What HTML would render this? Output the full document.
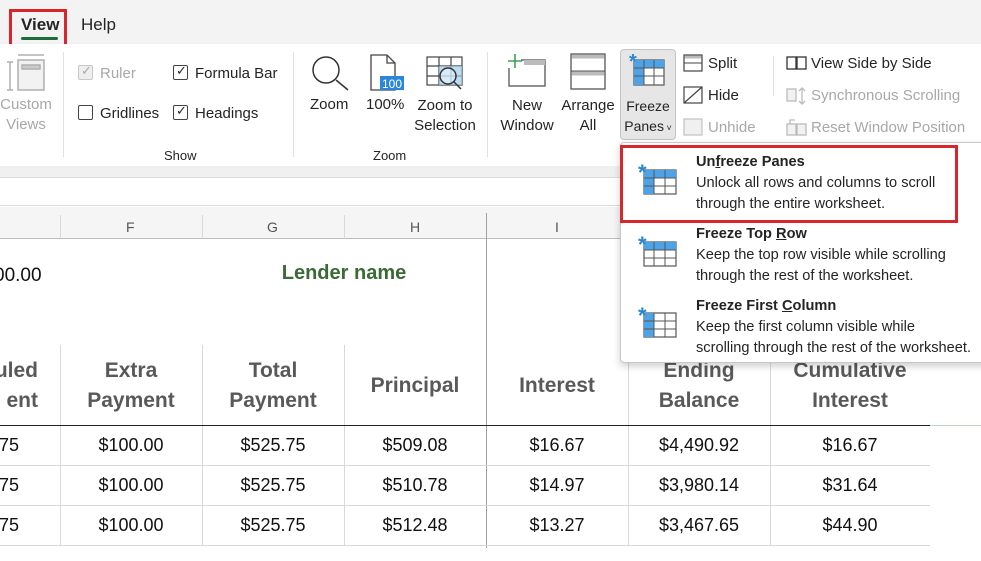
<!DOCTYPE html>
<html><head><meta charset="utf-8"><style>
*{margin:0;padding:0;box-sizing:border-box}
body{width:981px;height:561px;overflow:hidden;background:#fff;font-family:"Liberation Sans",sans-serif;position:relative;color:#242424}
.a{position:absolute;white-space:nowrap}
.t{font-size:15px}
.g{color:#a8a8a8}
.cell{position:absolute;text-align:center;font-family:"Liberation Sans Narrow","Liberation Sans",sans-serif}
.hd{font-weight:bold;color:#595959;font-size:21px;line-height:30px}
.dv{font-size:18px;color:#111}
.vl{position:absolute;width:1px;background:#d9d9d9}
.hl{position:absolute;height:1px;background:#d9d9d9}
.cb{position:absolute;width:15px;height:15px;border:1px solid #444;border-radius:2px;background:#fff}
.c{text-align:center;line-height:20px}
</style></head><body>
<div class="a" style="left:0;top:0;width:981px;height:44px;background:#f3f3f3"></div>
<div class="a" style="left:9px;top:9px;width:58px;height:44px;border:3px solid #d9252c"></div>
<div class="a" style="left:21px;top:15px;font-size:17px;font-weight:bold;color:#242424">View</div>
<div class="a" style="left:21px;top:37px;width:37px;height:3px;background:#1e6b3c;border-radius:2px"></div>
<div class="a" style="left:81px;top:15px;font-size:17px">Help</div>
<div class="a" style="left:0;top:44px;width:981px;height:122px;background:#fff;box-shadow:0 2px 4px rgba(0,0,0,.15)"></div>
<div class="a" style="left:0;top:166px;width:981px;height:11px;background:#f0f0f0"></div>
<div class="a" style="left:0;top:177px;width:981px;height:29px;background:#fff;border-top:1px solid #dcdcdc;border-bottom:1px solid #dcdcdc"></div>
<svg class="a" style="left:6px;top:52px" width="40" height="40"><g stroke="#b0b0b0" fill="none" stroke-width="1.5"><line x1="12" y1="3" x2="38" y2="3"/><rect x="12" y="8" width="26" height="30" fill="#f2f2f2"/><rect x="16" y="13" width="18" height="4" fill="#ccc"/><line x1="4" y1="10" x2="4" y2="38"/><line x1="1" y1="10" x2="7" y2="10"/><line x1="1" y1="38" x2="7" y2="38"/></g></svg>
<div class="a t g c" style="left:0;top:95px;width:52px">Custom<br>Views</div>
<div class="vl" style="left:63px;top:52px;height:105px;background:#e1e1e1"></div>
<div class="cb" style="left:78px;top:65px;border-color:#c8c8c8;background:#eee"></div><div class="a g" style="left:81px;top:63px;font-size:13px">✓</div>
<div class="a t g" style="left:100px;top:65px">Ruler</div>
<div class="cb" style="left:78px;top:105px"></div>
<div class="a t" style="left:100px;top:105px">Gridlines</div>
<div class="cb" style="left:173px;top:65px"></div><div class="a" style="left:176px;top:63px;font-size:13px">✓</div>
<div class="a t" style="left:195px;top:65px">Formula Bar</div>
<div class="cb" style="left:173px;top:105px"></div><div class="a" style="left:176px;top:103px;font-size:13px">✓</div>
<div class="a t" style="left:195px;top:105px">Headings</div>
<div class="a" style="left:164px;top:148px;font-size:13px">Show</div>
<div class="vl" style="left:293px;top:52px;height:105px;background:#e1e1e1"></div>
<svg class="a" style="left:310px;top:54px" width="42" height="40"><circle cx="16" cy="16" r="13" stroke="#333" stroke-width="1.5" fill="none"/><line x1="26" y1="26" x2="38" y2="36" stroke="#333" stroke-width="1.5"/></svg>
<div class="a t" style="left:310px;top:96px">Zoom</div>
<svg class="a" style="left:369px;top:54px" width="36" height="38"><path d="M2 1H18L26 9V36H2Z" fill="#fff" stroke="#444" stroke-width="1.3"/><path d="M18 1V9H26" fill="none" stroke="#444" stroke-width="1.3"/><rect x="11" y="22" width="24" height="14" fill="#2b88d8"/><text x="23" y="34" font-size="12" fill="#fff" text-anchor="middle" font-family="Liberation Sans Narrow,Liberation Sans,sans-serif">100</text></svg>
<div class="a t" style="left:366px;top:96px">100%</div>
<svg class="a" style="left:426px;top:56px" width="40" height="36"><g stroke="#444" stroke-width="1.2" fill="none"><rect x="1" y="1" width="35" height="28"/><line x1="1" y1="10" x2="36" y2="10"/><line x1="1" y1="20" x2="36" y2="20"/><line x1="13" y1="1" x2="13" y2="29"/><line x1="25" y1="1" x2="25" y2="29"/></g><rect x="13" y="10" width="23" height="19" fill="#9fcdf0" opacity=".7"/><circle cx="22" cy="20" r="8" stroke="#333" stroke-width="1.5" fill="#fff" fill-opacity=".4"/><line x1="28" y1="26" x2="35" y2="33" stroke="#333" stroke-width="1.5"/></svg>
<div class="a t c" style="left:414px;top:96px;width:62px">Zoom to<br>Selection</div>
<div class="a" style="left:373px;top:148px;font-size:13px">Zoom</div>
<div class="vl" style="left:487px;top:52px;height:105px;background:#e1e1e1"></div>
<svg class="a" style="left:506px;top:53px" width="42" height="36"><rect x="3" y="7" width="36" height="26" fill="#fff" stroke="#555" stroke-width="1.3"/><rect x="18" y="7" width="21" height="5" fill="#bbb"/><rect x="1" y="1" width="14" height="14" fill="#fff"/><path d="M9 1V15M2 8H16" stroke="#3aa057" stroke-width="1.6"/></svg>
<div class="a t c" style="left:497px;top:96px;width:60px">New<br>Window</div>
<svg class="a" style="left:570px;top:53px" width="38" height="38"><rect x="1" y="1" width="34" height="35" fill="#fff" stroke="#555" stroke-width="1.3"/><rect x="1.5" y="1.5" width="33" height="4" fill="#bbb"/><line x1="1" y1="18" x2="35" y2="18" stroke="#555"/><rect x="1.5" y="18.5" width="33" height="4" fill="#bbb"/></svg>
<div class="a t c" style="left:558px;top:96px;width:60px">Arrange<br>All</div>
<div class="a" style="left:620px;top:49px;width:56px;height:91px;background:#e6e6e6;border:1px solid #c4c4c4;border-radius:4px"></div>
<svg class="a" style="left:626px;top:52px" width="42" height="36"><rect x="8" y="8" width="30" height="25" fill="#fff" stroke="#555" stroke-width="1.2"/><rect x="8" y="8" width="30" height="8" fill="#4da3e6"/><rect x="8" y="8" width="10" height="25" fill="#4da3e6"/><path d="M8 16H38M8 24H38M18 8V33M28 8V33" stroke="#555" stroke-width="1"/><text x="3" y="16" font-size="20" fill="#2a86d1" font-weight="bold" font-family="Liberation Sans">*</text></svg>
<div class="a c" style="left:620px;top:96px;width:56px;font-size:14px">Freeze<br>Panes<span style="font-size:9px"> ˅</span></div>
<svg class="a" style="left:683px;top:54px" width="20" height="18"><rect x="1" y="1" width="18" height="16" fill="#fff" stroke="#444" stroke-width="1.2"/><rect x="1.5" y="1.5" width="17" height="3" fill="#bbb"/><line x1="1" y1="9" x2="19" y2="9" stroke="#444"/></svg>
<div class="a t" style="left:708px;top:55px">Split</div>
<svg class="a" style="left:683px;top:86px" width="20" height="18"><rect x="1" y="1" width="18" height="16" fill="#fff" stroke="#444" stroke-width="1.2"/><line x1="1" y1="17" x2="19" y2="1" stroke="#444" stroke-width="1.2"/></svg>
<div class="a t" style="left:708px;top:87px">Hide</div>
<svg class="a" style="left:683px;top:118px" width="20" height="18"><rect x="1" y="1" width="18" height="16" fill="#f0f0f0" stroke="#c0c0c0" stroke-width="1.2"/></svg>
<div class="a t g" style="left:708px;top:119px">Unhide</div>
<div class="vl" style="left:773px;top:56px;height:40px;background:#e1e1e1"></div>
<svg class="a" style="left:786px;top:56px" width="22" height="14"><rect x="1" y="1" width="9" height="12" fill="#fff" stroke="#333" stroke-width="1.3"/><rect x="11" y="1" width="9" height="12" fill="#fff" stroke="#333" stroke-width="1.3"/></svg>
<div class="a t" style="left:811px;top:55px">View Side by Side</div>
<svg class="a" style="left:786px;top:87px" width="22" height="18"><rect x="1" y="2" width="9" height="12" fill="#f2f2f2" stroke="#bbb" stroke-width="1.3"/><path d="M16 1V17M13 4L16 1 19 4M13 14L16 17 19 14" stroke="#bbb" fill="none" stroke-width="1.3"/></svg>
<div class="a t g" style="left:811px;top:87px">Synchronous Scrolling</div>
<svg class="a" style="left:786px;top:118px" width="22" height="18"><rect x="1" y="6" width="9" height="11" fill="#f2f2f2" stroke="#bbb" stroke-width="1.3"/><rect x="11" y="6" width="9" height="11" fill="#f2f2f2" stroke="#bbb" stroke-width="1.3"/><path d="M4 6V2H9" stroke="#bbb" fill="none" stroke-width="1.3"/></svg>
<div class="a t g" style="left:811px;top:119px">Reset Window Position</div>
<div class="a" style="left:0;top:207px;width:981px;height:32px;background:#f5f5f5;border-bottom:1px solid #bdbdbd"></div>
<div class="vl" style="left:60px;top:215px;height:24px"></div>
<div class="vl" style="left:202px;top:215px;height:24px"></div>
<div class="vl" style="left:344px;top:215px;height:24px"></div>
<div class="vl" style="left:628px;top:215px;height:24px"></div>
<div class="a" style="left:126px;top:219px;font-size:14px;color:#555">F</div>
<div class="a" style="left:267px;top:219px;font-size:14px;color:#555">G</div>
<div class="a" style="left:410px;top:219px;font-size:14px;color:#555">H</div>
<div class="a" style="left:555px;top:219px;font-size:14px;color:#555">I</div>
<div class="vl" style="left:486px;top:213px;height:335px;background:#a0a0a0"></div>
<div class="vl" style="left:60px;top:345px;height:200px"></div>
<div class="vl" style="left:202px;top:345px;height:200px"></div>
<div class="vl" style="left:344px;top:345px;height:200px"></div>
<div class="vl" style="left:628px;top:345px;height:200px"></div>
<div class="vl" style="left:770px;top:345px;height:200px"></div>
<div class="a" style="left:0;top:425px;width:930px;height:1px;background:#222"></div>
<div class="a" style="left:930px;top:425px;width:51px;height:1px;background:#b7d7c1"></div>
<div class="hl" style="left:0;top:465px;width:930px"></div>
<div class="hl" style="left:0;top:505px;width:930px"></div>
<div class="hl" style="left:0;top:545px;width:930px"></div>
<div class="a dv" style="left:-6px;top:265px;font-size:19px">00.00</div>
<div class="cell" style="left:202px;top:262px;width:284px;font-size:20px;font-weight:bold;color:#3a6b35">Lender name</div>
<div class="cell hd" style="left:-50px;top:356px;width:88px;text-align:right">uled<br>ent</div>
<div class="cell hd" style="left:60px;top:356px;width:142px">Extra<br>Payment</div>
<div class="cell hd" style="left:202px;top:356px;width:142px">Total<br>Payment</div>
<div class="cell hd" style="left:344px;top:371px;width:142px">Principal</div>
<div class="cell hd" style="left:486px;top:371px;width:142px">Interest</div>
<div class="cell hd" style="left:628px;top:356px;width:142px">Ending<br>Balance</div>
<div class="cell hd" style="left:770px;top:356px;width:160px">Cumulative<br>Interest</div>
<div class="a dv" style="left:-6px;top:435px">.75</div><div class="cell dv" style="left:60px;top:435px;width:142px">$100.00</div><div class="cell dv" style="left:202px;top:435px;width:142px">$525.75</div><div class="cell dv" style="left:344px;top:435px;width:142px">$509.08</div><div class="cell dv" style="left:486px;top:435px;width:142px">$16.67</div><div class="cell dv" style="left:628px;top:435px;width:142px">$4,490.92</div><div class="cell dv" style="left:770px;top:435px;width:160px">$16.67</div>
<div class="a dv" style="left:-6px;top:475px">.75</div><div class="cell dv" style="left:60px;top:475px;width:142px">$100.00</div><div class="cell dv" style="left:202px;top:475px;width:142px">$525.75</div><div class="cell dv" style="left:344px;top:475px;width:142px">$510.78</div><div class="cell dv" style="left:486px;top:475px;width:142px">$14.97</div><div class="cell dv" style="left:628px;top:475px;width:142px">$3,980.14</div><div class="cell dv" style="left:770px;top:475px;width:160px">$31.64</div>
<div class="a dv" style="left:-6px;top:515px">.75</div><div class="cell dv" style="left:60px;top:515px;width:142px">$100.00</div><div class="cell dv" style="left:202px;top:515px;width:142px">$525.75</div><div class="cell dv" style="left:344px;top:515px;width:142px">$512.48</div><div class="cell dv" style="left:486px;top:515px;width:142px">$13.27</div><div class="cell dv" style="left:628px;top:515px;width:142px">$3,467.65</div><div class="cell dv" style="left:770px;top:515px;width:160px">$44.90</div>
<div class="a" style="left:620px;top:142px;width:370px;height:221px;background:#fff;border:1px solid #c8c8c8;border-radius:4px;box-shadow:0 3px 8px rgba(0,0,0,.2)"></div>
<div class="a" style="left:620px;top:145px;width:338px;height:78px;border:3px solid #d9252c"></div>
<svg class="a" style="left:638px;top:164px" width="42" height="34"><rect x="6" y="6" width="32" height="24" fill="#fff" stroke="#555" stroke-width="1.2"/><rect x="6" y="6" width="32" height="8" fill="#4da3e6"/><rect x="6" y="6" width="10" height="24" fill="#4da3e6"/><path d="M6 14H38M6 22H38M16 6V30M27 6V30" stroke="#555"/><text x="0" y="16" font-size="22" fill="#2a86d1" font-weight="bold" font-family="Liberation Sans">*</text></svg>
<svg class="a" style="left:638px;top:236px" width="42" height="34"><rect x="6" y="6" width="32" height="24" fill="#fff" stroke="#555" stroke-width="1.2"/><rect x="6" y="6" width="32" height="8" fill="#4da3e6"/><path d="M6 14H38M6 22H38M16 6V30M27 6V30" stroke="#555"/><text x="0" y="16" font-size="22" fill="#2a86d1" font-weight="bold" font-family="Liberation Sans">*</text></svg>
<svg class="a" style="left:638px;top:307px" width="42" height="34"><rect x="6" y="6" width="32" height="24" fill="#fff" stroke="#555" stroke-width="1.2"/><rect x="6" y="6" width="10" height="24" fill="#4da3e6"/><path d="M6 14H38M6 22H38M16 6V30M27 6V30" stroke="#555"/><text x="0" y="16" font-size="22" fill="#2a86d1" font-weight="bold" font-family="Liberation Sans">*</text></svg>
<div class="a" style="left:696px;top:152px;font-size:14.6px;line-height:21px"><b>Un<u>f</u>reeze Panes</b><br>Unlock all rows and columns to scroll<br>through the entire worksheet.</div>
<div class="a" style="left:696px;top:224px;font-size:14.6px;line-height:21px"><b>Freeze Top <u>R</u>ow</b><br>Keep the top row visible while scrolling<br>through the rest of the worksheet.</div>
<div class="a" style="left:696px;top:296px;font-size:14.6px;line-height:21px"><b>Freeze First <u>C</u>olumn</b><br>Keep the first column visible while<br>scrolling through the rest of the worksheet.</div>
</body></html>
